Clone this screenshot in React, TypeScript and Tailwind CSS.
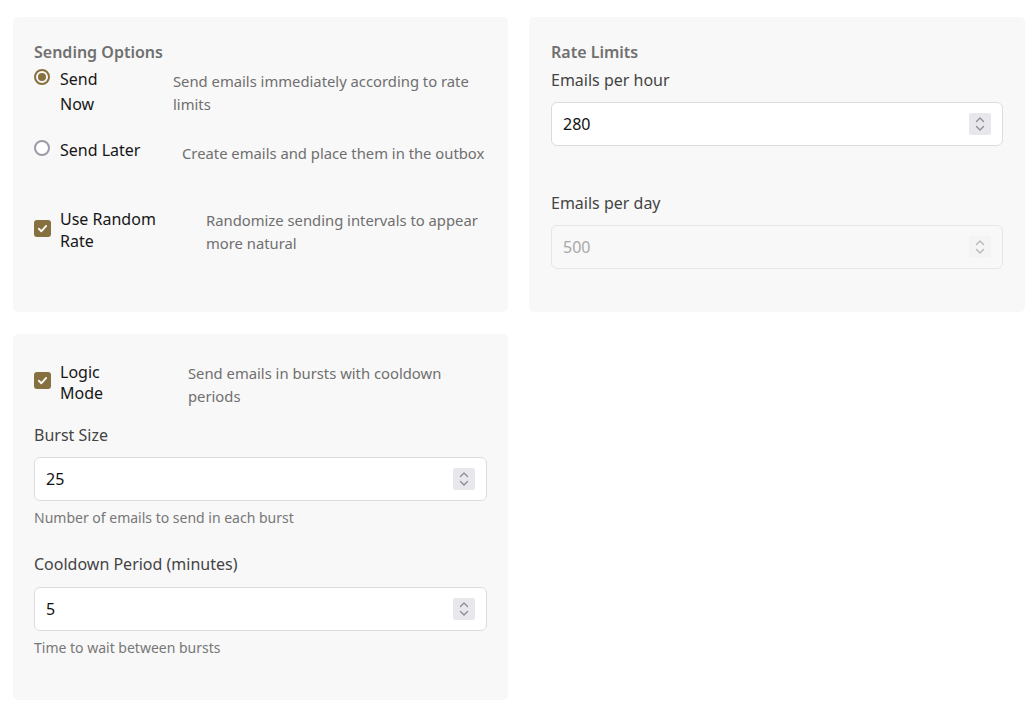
import type { ReactNode } from "react";

const font = { fontFamily: '"Noto Sans", "Open Sans", sans-serif' };

function Spinner({ disabled }: { disabled?: boolean }) {
	return (
		<div
			className={
				"flex h-[22px] w-[22px] items-center justify-center rounded-[2px] " +
				(disabled ? "bg-[#f2f2f4] opacity-60" : "bg-[#e7e7ec]")
			}
		>
			<svg width="12" height="18" viewBox="0 0 12 18" fill="none">
				<path d="M2.5 6.5 L6 3 L9.5 6.5" stroke="#8d8d98" strokeWidth="1.4" strokeLinecap="round" strokeLinejoin="round" />
				<path d="M2.5 11.5 L6 15 L9.5 11.5" stroke="#8d8d98" strokeWidth="1.4" strokeLinecap="round" strokeLinejoin="round" />
			</svg>
		</div>
	);
}

function NumberField({ value, disabled }: { value: string; disabled?: boolean }) {
	return (
		<div
			className={
				"flex h-[44px] items-center justify-between rounded-[6px] border pl-[11px] pr-[11px] " +
				(disabled ? "border-[#e6e6e6] bg-[#f8f8f8] text-[#a8a8a8]" : "border-[#dcdcdc] bg-white text-[#111]")
			}
		>
			<span className="text-[16px]">{value}</span>
			<Spinner disabled={disabled} />
		</div>
	);
}

function Radio({ checked }: { checked?: boolean }) {
	return checked ? (
		<span className="flex h-[16px] w-[16px] items-center justify-center rounded-full border-[2px] border-[#87703f]">
			<span className="h-[8px] w-[8px] rounded-full bg-[#87703f]" />
		</span>
	) : (
		<span className="block h-[16px] w-[16px] rounded-full border-[2px] border-[#9d9ba8] bg-white" />
	);
}

function Checkbox() {
	return (
		<span className="flex h-[17px] w-[17px] items-center justify-center rounded-[3px] bg-[#87703f]">
			<svg width="11" height="11" viewBox="0 0 12 12" fill="none">
				<path d="M2 6.3 L4.8 9 L10 3.2" stroke="white" strokeWidth="2" strokeLinecap="round" strokeLinejoin="round" />
			</svg>
		</span>
	);
}

function Card({ children, className }: { children: ReactNode; className?: string }) {
	return <div className={"rounded-[5px] bg-[#f8f8f8] " + (className ?? "")}>{children}</div>;
}

function Desc({ children, className }: { children: ReactNode; className?: string }) {
	return <div className={"flex-1 text-[14.8px] leading-[23px] text-[#6f6f6f] " + (className ?? "")}>{children}</div>;
}

export default function App() {
	return (
		<div className="min-h-[708px] bg-white pl-[13px] pt-[17px]" style={font}>
			<div className="grid grid-cols-[495px_496px] gap-x-[21px] gap-y-[22px]">
				<Card className="h-[295px] pl-[21px] pr-[21px] pt-[24px]">
					<div className="text-[16px] font-semibold leading-[22px] text-[#707070]">Sending Options</div>
					<div className="mt-[4px] flex items-start">
						<div className="mt-[2px] w-[26px]">
							<Radio checked />
						</div>
						<div className="w-[113px]">
							<div className="w-[50px] text-[16px] leading-[25px] text-[#161616]">Send Now</div>
						</div>
						<Desc className="mt-[3px]">Send emails immediately according to rate limits</Desc>
					</div>
					<div className="mt-[21px] flex items-start">
						<div className="mt-[2px] w-[26px]">
							<Radio />
						</div>
						<div className="w-[122px] text-[16px] leading-[25px] text-[#161616]">Send Later</div>
						<Desc className="mt-[4px] whitespace-nowrap">Create emails and place them in the outbox</Desc>
					</div>
					<div className="mt-[43px] flex items-start">
						<div className="mt-[12px] w-[26px]">
							<Checkbox />
						</div>
						<div className="w-[146px]">
							<div className="w-[108px] text-[16px] leading-[22px] text-[#161616]">Use Random Rate</div>
						</div>
						<Desc className="mt-[1px]">Randomize sending intervals to appear more natural</Desc>
					</div>
				</Card>

				<Card className="h-[295px] pl-[22px] pr-[22px] pt-[24px]">
					<div className="text-[16px] font-semibold leading-[22px] text-[#707070]">Rate Limits</div>
					<div className="mt-[6px] text-[16px] leading-[22px] text-[#444]">Emails per hour</div>
					<div className="mt-[11px]">
						<NumberField value="280" />
					</div>
					<div className="mt-[46px] text-[16px] leading-[22px] text-[#444]">Emails per day</div>
					<div className="mt-[11px]">
						<NumberField value="500" disabled />
					</div>
				</Card>

				<Card className="h-[366px] pl-[21px] pr-[21px] pt-[28px]">
					<div className="flex items-start">
						<div className="mt-[10px] w-[26px]">
							<Checkbox />
						</div>
						<div className="w-[128px]">
							<div className="w-[60px] text-[16px] leading-[21px] text-[#161616]">Logic Mode</div>
						</div>
						<Desc className="pr-[40px]">Send emails in bursts with cooldown periods</Desc>
					</div>
					<div className="mt-[16px] text-[16px] leading-[22px] text-[#444]">Burst Size</div>
					<div className="mt-[11px]">
						<NumberField value="25" />
					</div>
					<div className="mt-[8px] text-[14px] leading-[18px] text-[#777]">Number of emails to send in each burst</div>
					<div className="mt-[26px] text-[16px] leading-[22px] text-[#444]">Cooldown Period (minutes)</div>
					<div className="mt-[12px]">
						<NumberField value="5" />
					</div>
					<div className="mt-[8px] text-[14px] leading-[18px] text-[#777]">Time to wait between bursts</div>
				</Card>
			</div>
		</div>
	);
}
